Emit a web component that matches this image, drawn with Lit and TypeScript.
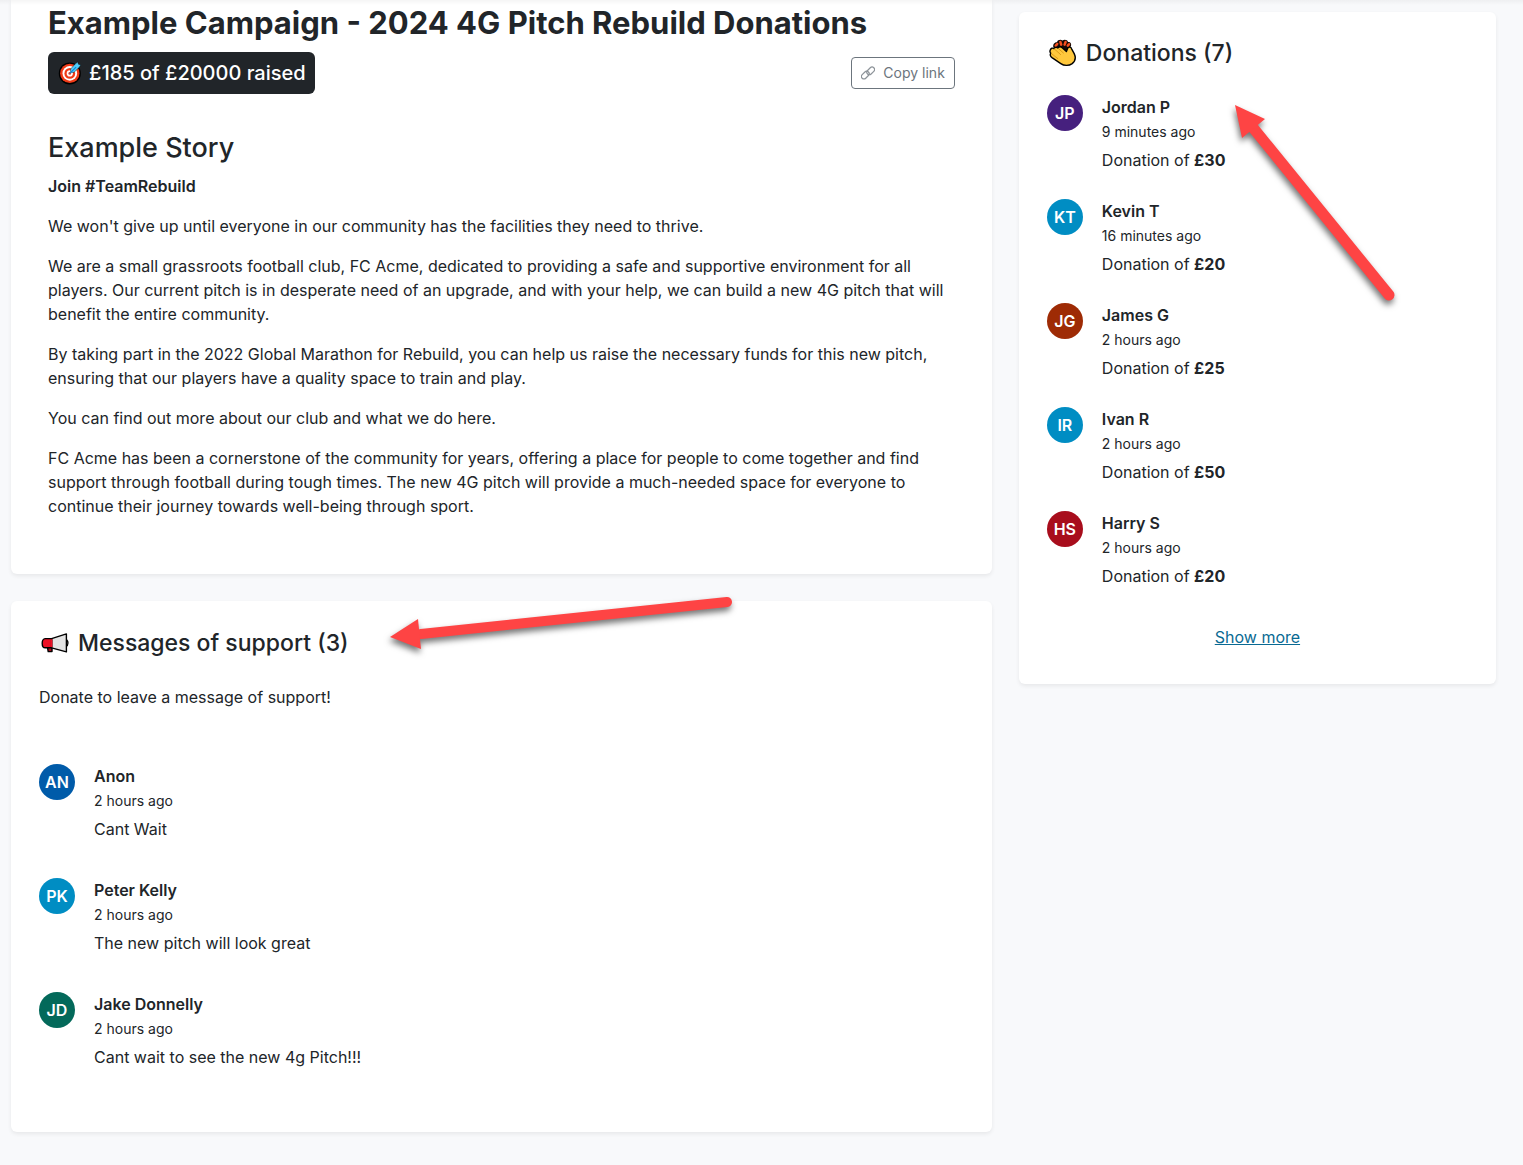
import { LitElement, html, css, svg } from "lit";
import { customElement, property } from "lit/decorators.js";

type Tone = "purple" | "sky" | "rust" | "crimson" | "blue" | "green";

interface Entry {
  initials: string;
  tone: Tone;
  name: string;
  when: string;
  text?: string;
  amount?: string;
}

const donations: Entry[] = [
  { initials: "JP", tone: "purple", name: "Jordan P", when: "9 minutes ago", amount: "£30" },
  { initials: "KT", tone: "sky", name: "Kevin T", when: "16 minutes ago", amount: "£20" },
  { initials: "JG", tone: "rust", name: "James G", when: "2 hours ago", amount: "£25" },
  { initials: "IR", tone: "sky", name: "Ivan R", when: "2 hours ago", amount: "£50" },
  { initials: "HS", tone: "crimson", name: "Harry S", when: "2 hours ago", amount: "£20" },
];

const messages: Entry[] = [
  { initials: "AN", tone: "blue", name: "Anon", when: "2 hours ago", text: "Cant Wait" },
  { initials: "PK", tone: "sky", name: "Peter Kelly", when: "2 hours ago", text: "The new pitch will look great" },
  { initials: "JD", tone: "green", name: "Jake Donnelly", when: "2 hours ago", text: "Cant wait to see the new 4g Pitch!!!" },
];

const story = [
  "We won't give up until everyone in our community has the facilities they need to thrive.",
  "We are a small grassroots football club, FC Acme, dedicated to providing a safe and supportive environment for all players. Our current pitch is in desperate need of an upgrade, and with your help, we can build a new 4G pitch that will benefit the entire community.",
  "By taking part in the 2022 Global Marathon for Rebuild, you can help us raise the necessary funds for this new pitch, ensuring that our players have a quality space to train and play.",
  "You can find out more about our club and what we do here.",
  "FC Acme has been a cornerstone of the community for years, offering a place for people to come together and find support through football during tough times. The new 4G pitch will provide a much-needed space for everyone to continue their journey towards well-being through sport.",
];

const targetIcon = html`<svg class="icon-target" viewBox="0 0 24 24" aria-hidden="true">
  <circle cx="12.8" cy="12.4" r="11" fill="#000" />
  <circle cx="12.8" cy="12.4" r="9.7" fill="#f03a17" />
  <circle cx="12.8" cy="12.4" r="7.3" fill="#fff" />
  <circle cx="12.8" cy="12.4" r="5.4" fill="#f03a17" />
  <circle cx="12.8" cy="12.4" r="3.1" fill="#fff" />
  <circle cx="12.8" cy="12.4" r="1.4" fill="#f03a17" />
  <path d="M13.6 8 L18.4 2.8 L20.8 1 L21.4 3.2 L23.8 4 L22.2 6.2 L17 11.4 L13.6 11.4 Z"
    fill="#50cdfa" stroke="#000" stroke-width=".4" stroke-linejoin="round" />
  <path d="M12.8 12.4 L18.8 6.4" stroke="#0b84d8" stroke-width="1.1" stroke-linecap="round" />
</svg>`;

const linkIcon = html`<svg class="icon-link" viewBox="0 0 14 14" aria-hidden="true">
  <g fill="none" stroke="#8d9399" stroke-width="1.2" transform="rotate(-45 7 7)">
    <rect x="-.8" y="4.1" width="8.8" height="5" rx="2.5" />
    <rect x="6" y="4.9" width="8.8" height="5" rx="2.5" />
  </g>
</svg>`;

const clapIcon = html`<svg class="icon" viewBox="0 0 28 28" aria-hidden="true">
  <path d="M4.4 8.6 C3.6 5.4 5.4 3 8 3.2 C8.6 .8 11.6 .2 13.4 1.4 C15.6 0 18.6 .8 19 3 C21.6 2.8 22.8 5 21.8 7.6 L18 11 L8 11 Z" fill="#160a05" />
  <path d="M6.8 6.6 L8.2 5 M12.2 5.6 L11.4 3 M15.6 5.6 L16.6 3 M18.8 6.6 L20 5.2" stroke="#f7501e" stroke-width="2.5" stroke-linecap="round" />
  <path d="M1.4 10.8 C1.8 9.2 3.6 8.6 5 9.6 C5.6 8.2 7.8 7.8 9 9 C10 7.6 12 7.6 13.2 8.8 L17.4 12.6 L18.6 9.4 C19.4 7.6 22 7.8 22.6 9.8 L25.2 14.6 C27 18.4 26.2 22.2 23.2 24.6 C20 27 15 27 11.8 24.6 L3 18.6 C1.2 17.2 .8 15.4 1.8 14.2 C.8 13.2 .8 11.8 1.4 10.8 Z"
    fill="#ffc83d" stroke="#000" stroke-width="1.4" stroke-linejoin="round" />
  <path d="M5.2 9.8 L11.6 15.6 M9.2 9.4 L14.4 14 M2.2 14.4 L8.8 19.6" stroke="#d39010" stroke-width=".8" fill="none" stroke-linecap="round" />
</svg>`;

const megaphoneIcon = html`<svg class="icon" viewBox="0 0 28 28" aria-hidden="true">
  <path d="M25 10.6 C27.6 11.4 27.6 16.6 25 17.4 Z" fill="#b8b8b8" stroke="#000" stroke-width="1.3" stroke-linejoin="round" />
  <path d="M5.4 17 H11 V22.6 H7.2 L6.4 18 Z" fill="#a4101c" stroke="#000" stroke-width="1.4" stroke-linejoin="round" />
  <path d="M10.6 9.6 L25.4 4.9 V22.9 L10.6 18.8 Z" fill="#e3e3e3" stroke="#000" stroke-width="1.4" stroke-linejoin="round" />
  <path d="M10.6 9.6 H4.2 C.2 9.6 .2 18.8 4.2 18.8 H10.6 Z" fill="#ee1126" stroke="#000" stroke-width="1.4" stroke-linejoin="round" />
  <path d="M10.6 10.3 V18.1" stroke="#ee1126" stroke-width="1.6" />
</svg>`;

const supportArrow = svg`
  <path d="M41 44 L347 12" stroke="#fe4444" stroke-width="10" stroke-linecap="round" />
  <path d="M10 47 L38 29 L41 59 Z" fill="#fe4444" />`;

const donationArrow = svg`
  <path d="M25 34 L164 205" stroke="#fe4444" stroke-width="11" stroke-linecap="round" />
  <path d="M10 15 L40 29 L17 48 Z" fill="#fe4444" />`;

@customElement("entry-item")
export class EntryItem extends LitElement {
  static styles = css`
    :host {
      display: flex;
      align-items: flex-start;
      gap: 19px;
    }
    .avatar {
      flex: none;
      width: 36px;
      height: 36px;
      border-radius: 50%;
      display: grid;
      place-items: center;
      color: #fff;
      font-size: 16px;
      font-weight: 600;
    }
    .purple { background: #46207e; }
    .sky { background: #008dc3; }
    .rust { background: #9e2b05; }
    .crimson { background: #a80d1c; }
    .blue { background: #005ba9; }
    .green { background: #03695a; }
    .body { min-width: 0; }
    .name, .text {
      margin: 0;
      font-size: 16px;
      line-height: 24px;
    }
    .name { font-weight: 600; }
    .when {
      display: block;
      margin: 3px 0 6px;
      font-size: 14px;
      line-height: 20px;
    }
    .amount { font-weight: 700; }
  `;

  @property({ attribute: false }) entry!: Entry;

  render() {
    const e = this.entry;
    return html`
      <span class="avatar ${e.tone}" aria-hidden="true">${e.initials}</span>
      <div class="body">
        <p class="name">${e.name}</p>
        <span class="when">${e.when}</span>
        <p class="text">${e.amount ? html`Donation of <b class="amount">${e.amount}</b>` : e.text}</p>
      </div>
    `;
  }
}

@customElement("app-root")
export class AppRoot extends LitElement {
  static styles = css`
    :host {
      display: block;
      min-height: 100vh;
      box-sizing: border-box;
      background: #f8f9fb;
      color: #212529;
      font-family: Inter, "Liberation Sans", sans-serif;
      font-size: 16px;
      line-height: 24px;
    }
    .page {
      display: grid;
      grid-template-columns: minmax(0, 37fr) minmax(0, 18fr);
      gap: 27px;
      align-items: start;
      padding: 0 27px 33px 11px;
      background: linear-gradient(rgba(0, 0, 0, 0.04), transparent) no-repeat 0 0 / 100% 5px;
    }
    .main {
      display: grid;
      gap: 27px;
    }
    .card {
      position: relative;
      background: #fff;
      border-radius: 6px;
      box-shadow: 0 2px 4px rgba(0, 0, 0, 0.07);
    }
    .campaign {
      border-radius: 0 0 6px 6px;
      padding: 4px 37px 56px;
      background: linear-gradient(rgba(0, 0, 0, 0.04), transparent) no-repeat 0 0 / 100% 5px #fff;
    }
    .title {
      margin: 0 0 10px;
      font-size: 31px;
      line-height: 38px;
      font-weight: 700;
    }
    .bar {
      display: flex;
      justify-content: space-between;
      align-items: center;
      margin-bottom: 36px;
    }
    .raised {
      display: flex;
      align-items: center;
      gap: 8px;
      padding: 9px;
      border-radius: 6px;
      background: #212529;
      color: #fff;
      font-size: 20px;
      font-weight: 500;
    }
    .icon-target {
      width: 24px;
      height: 24px;
    }
    .copy {
      display: flex;
      align-items: center;
      gap: 8px;
      padding: 6px 9px;
      border: 1px solid #6c757d;
      border-radius: 4px;
      background: #fff;
      color: #6c757d;
      font-family: inherit;
      font-size: 14px;
      line-height: 18px;
    }
    .icon-link {
      width: 14px;
      height: 14px;
    }
    .story-title {
      margin: 0 0 9px;
      font-size: 27px;
      line-height: 35px;
      font-weight: 500;
    }
    .para {
      margin: 0 0 16px;
    }
    .para:last-child {
      margin-bottom: 0;
    }
    .lead {
      font-weight: 600;
    }
    .support {
      padding: 27px 28px 63px;
    }
    .heading {
      display: flex;
      align-items: center;
      gap: 9px;
      margin: 0 0 27px;
      padding-left: 2px;
      font-size: 23px;
      line-height: 30px;
      font-weight: 500;
    }
    .icon {
      width: 28px;
      height: 28px;
    }
    .prompt {
      margin: 0 0 55px;
    }
    .list {
      display: grid;
      margin: 0;
      padding: 0;
      list-style: none;
    }
    .messages {
      gap: 37px;
    }
    .donations {
      margin-top: 12px;
      padding: 26px 28px 35px;
    }
    .givers {
      gap: 27px;
    }
    .more {
      margin-top: 37px;
      text-align: center;
    }
    .link {
      color: #0a6a93;
      text-decoration: underline;
    }
    .arrow {
      position: absolute;
      overflow: visible;
      pointer-events: none;
      fill: none;
      filter: drop-shadow(-1px 4px 3px rgba(0, 0, 0, 0.55));
    }
    .arrow-support {
      left: 369px;
      top: -11px;
      width: 360px;
      height: 70px;
    }
    .arrow-donation {
      left: 206px;
      top: 78px;
      width: 180px;
      height: 220px;
    }
  `;

  render() {
    return html`
      <main class="page">
        <div class="main">
          <article class="card campaign">
            <h1 class="title">Example Campaign - 2024 4G Pitch Rebuild Donations</h1>
            <div class="bar">
              <div class="raised">${targetIcon}<span>£185 of £20000 raised</span></div>
              <button class="copy" type="button">${linkIcon}<span>Copy link</span></button>
            </div>
            <h2 class="story-title">Example Story</h2>
            <p class="para lead">Join #TeamRebuild</p>
            ${story.map((p) => html`<p class="para">${p}</p>`)}
          </article>
          <section class="card support">
            <h2 class="heading">${megaphoneIcon}<span>Messages of support (3)</span></h2>
            <p class="prompt">Donate to leave a message of support!</p>
            <ul class="list messages">
              ${messages.map((m) => html`<li><entry-item .entry=${m}></entry-item></li>`)}
            </ul>
            <svg class="arrow arrow-support" viewBox="0 0 360 70" aria-hidden="true">${supportArrow}</svg>
          </section>
        </div>
        <aside class="card donations">
          <h2 class="heading">${clapIcon}<span>Donations (7)</span></h2>
          <ul class="list givers">
            ${donations.map((d) => html`<li><entry-item .entry=${d}></entry-item></li>`)}
          </ul>
          <div class="more"><a class="link" href="#donations">Show more</a></div>
          <svg class="arrow arrow-donation" viewBox="0 0 180 220" aria-hidden="true">${donationArrow}</svg>
        </aside>
      </main>
    `;
  }
}
